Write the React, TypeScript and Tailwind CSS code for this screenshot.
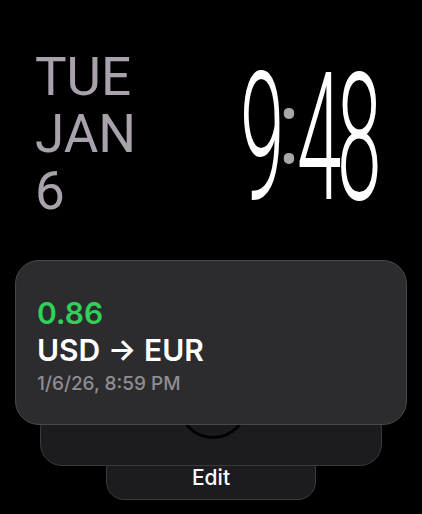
import React from "react";

export default function App() {
  return (
    <div className="w-[422px] h-[514px] bg-black overflow-hidden flex flex-col" style={{ fontFamily: "Inter, 'Noto Sans', sans-serif" }}>
      <div className="flex h-[210px]">
        <div className="pl-[35px] pt-[49px] text-[53px] leading-[57px] text-[#a9a2ac] font-normal" style={{ fontFamily: "Roboto, sans-serif" }}>
          <div>TUE</div>
          <div>JAN</div>
          <div>6</div>
        </div>
        <div className="ml-auto mr-[42px] pt-[49px] flex items-start h-[170px]" style={{ fontFamily: "Roboto, sans-serif" }}>
          <div className="w-[41px] h-[160px] relative">
            <span className="absolute -left-[3px] top-0 text-[178px] leading-[178px] font-light text-white origin-left scale-x-[0.45] inline-block">9</span>
          </div>
          <div className="w-[10px] relative h-[160px] flex flex-col items-center">
            <span className="mt-[41px] text-[52px] leading-[52px] text-[#a8a8a8] inline-block">•</span>
            <span className="-mt-[7px] text-[52px] leading-[52px] text-[#a8a8a8] inline-block">•</span>
          </div>
          <div className="w-[86px] h-[160px] relative">
            <span className="absolute left-[3px] top-0 text-[178px] leading-[178px] font-light text-white origin-left scale-x-[0.45] inline-block tracking-[-10px]">48</span>
          </div>
        </div>
      </div>
      <div className="mt-[50px] flex flex-col">
        <div className="relative z-20 ml-[15px] w-[392px] h-[165px] rounded-[24px] bg-[#2c2c2e] border border-[#48484a] pl-[21px] pt-[34px]">
          <div className="text-[30px] leading-[36px] font-semibold text-[#30d158]">0.86</div>
          <div className="text-[30px] leading-[38px] font-semibold text-white">USD → EUR</div>
          <div className="text-[19px] leading-[30px] font-medium text-[#8e8e93]">1/6/26, 8:59 PM</div>
        </div>
        <div className="relative z-10 ml-[40px] w-[342px] h-[60px] -mt-[19px] rounded-[22px] bg-[#1c1c1e] border border-[#3a3a3c]">
          <div className="absolute left-[137px] -top-[38px] w-[70px] h-[70px] rounded-full border-[3px] border-black bg-[#1a1a1a]" />
        </div>
        <div className="relative z-0 ml-[106px] w-[210px] h-[50px] -mt-[16px] rounded-[18px] bg-[#1c1c1e] border border-[#3a3a3c] flex items-end justify-center pb-[8px]">
          <span className="text-[21px] leading-[26px] font-medium text-white">Edit</span>
        </div>
      </div>
    </div>
  );
}
